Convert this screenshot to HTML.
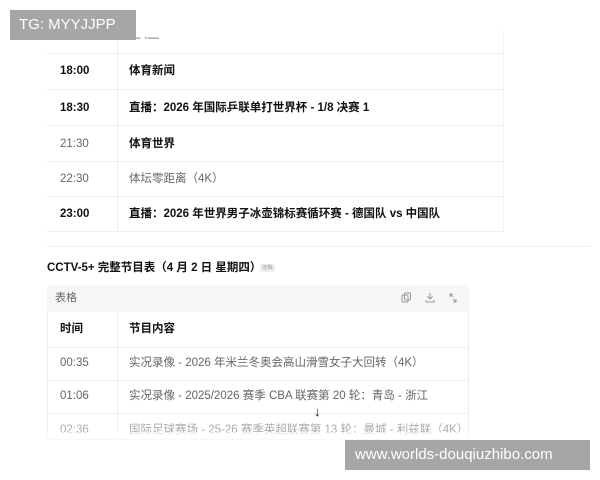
<!DOCTYPE html>
<html><head><meta charset="utf-8"><style>
*{margin:0;padding:0;box-sizing:border-box}
body{width:600px;height:480px;background:#fff;position:relative;overflow:hidden;font-family:"Liberation Sans","Noto Sans CJK SC",sans-serif;color:#222}
.a{position:absolute;white-space:nowrap}
.t{font-size:11.5px;line-height:14px}
.b{font-weight:bold;color:#111}
.g{color:#666}
.hl{position:absolute;height:1px;background:#eee}
.vl{position:absolute;width:1px;background:#eee}
</style></head><body>
<!-- top table -->
<div class="vl" style="left:117px;top:30px;height:202px"></div>
<div class="vl" style="left:503px;top:30px;height:202px;background:#f3f3f3"></div>
<div class="hl" style="left:47px;top:53px;width:456px"></div>
<div class="hl" style="left:47px;top:89px;width:456px"></div>
<div class="hl" style="left:47px;top:125px;width:456px"></div>
<div class="hl" style="left:47px;top:161px;width:456px"></div>
<div class="hl" style="left:47px;top:196px;width:456px"></div>
<div class="hl" style="left:47px;top:231px;width:456px"></div>
<div class="a t g" style="left:129px;top:31px">— ·—</div>
<div class="a t b" style="left:60px;top:64px">18:00</div>
<div class="a t b" style="left:129px;top:64px">体育新闻</div>
<div class="a t b" style="left:60px;top:101px">18:30</div>
<div class="a t b" style="left:129px;top:101px">直播：2026 年国际乒联单打世界杯 - 1/8 决赛 1</div>
<div class="a t g" style="left:60px;top:137px">21:30</div>
<div class="a t b" style="left:129px;top:137px">体育世界</div>
<div class="a t g" style="left:60px;top:172px">22:30</div>
<div class="a t g" style="left:129px;top:172px">体坛零距离（4K）</div>
<div class="a t b" style="left:60px;top:207px">23:00</div>
<div class="a t b" style="left:129px;top:207px">直播：2026 年世界男子冰壶锦标赛循环赛 - 德国队 vs 中国队</div>
<div class="hl" style="left:47px;top:246px;width:543px;background:#f0f0f0"></div>
<!-- heading -->
<div class="a t b" style="left:47px;top:261px">CCTV-5+ 完整节目表（4 月 2 日 星期四）</div>
<div class="a" style="left:260px;top:264px;width:15px;height:8px;background:#eee;border-radius:2px;font-size:5px;color:#999;text-align:center;line-height:8px">定稿</div>
<!-- second table -->
<div class="a" style="left:47px;top:285px;width:422px;height:155px;border:1px solid #eee;border-radius:4px"></div>
<div class="a" style="left:47px;top:285px;width:422px;height:27px;background:#f4f6f8;border-radius:4px 4px 0 0"></div>
<div class="a t g" style="left:55px;top:291px;font-size:11px">表格</div>
<svg class="a" style="left:401px;top:292px" width="60" height="12" viewBox="0 0 60 12" fill="none" stroke="#999" stroke-width="1">
<rect x="1" y="3" width="6" height="7" rx="1"/><rect x="3.5" y="1" width="6" height="7" rx="1"/>
<path d="M29 1v6M26.5 4.5l2.5 2.5 2.5-2.5M25 8v2h8V8"/>
<path d="M49 5V2h3M55 7v3h-3M49 2l3 3M55 10l-3-3"/>
</svg>
<div class="vl" style="left:117px;top:312px;height:128px"></div>
<div class="hl" style="left:47px;top:347px;width:422px"></div>
<div class="hl" style="left:47px;top:380px;width:422px"></div>
<div class="hl" style="left:47px;top:413px;width:422px"></div>
<div class="a t b" style="left:60px;top:322px">时间</div>
<div class="a t b" style="left:129px;top:322px">节目内容</div>
<div class="a t g" style="left:60px;top:356px">00:35</div>
<div class="a t g" style="left:129px;top:356px">实况录像 - 2026 年米兰冬奥会高山滑雪女子大回转（4K）</div>
<div class="a t g" style="left:60px;top:389px">01:06</div>
<div class="a t g" style="left:129px;top:389px">实况录像 - 2025/2026 赛季 CBA 联赛第 20 轮：青岛 - 浙江</div>
<div class="a t" style="left:60px;top:423px;color:#aaa">02:36</div>
<div class="a t" style="left:129px;top:423px;color:#aaa">国际足球赛场 - 25-26 赛季英超联赛第 13 轮：曼城 - 利兹联（4K）</div>
<div class="a" style="left:0;top:432px;width:600px;height:48px;background:#fff;opacity:.6"></div>
<div class="a" style="left:314px;top:404px;font-size:13px;font-weight:bold;color:#111">↓</div>
<!-- watermarks -->
<div class="a" style="left:10px;top:10px;width:126px;height:30px;background:#a6a6a6;color:#fff;font-size:15px;line-height:30px;padding-left:9px">TG: MYYJJPP</div>
<div class="a" style="left:345px;top:440px;width:245px;height:30px;background:#a6a6a6;color:#fff;font-size:15px;line-height:30px;padding-left:10px">www.worlds-douqiuzhibo.com</div>
</body></html>
